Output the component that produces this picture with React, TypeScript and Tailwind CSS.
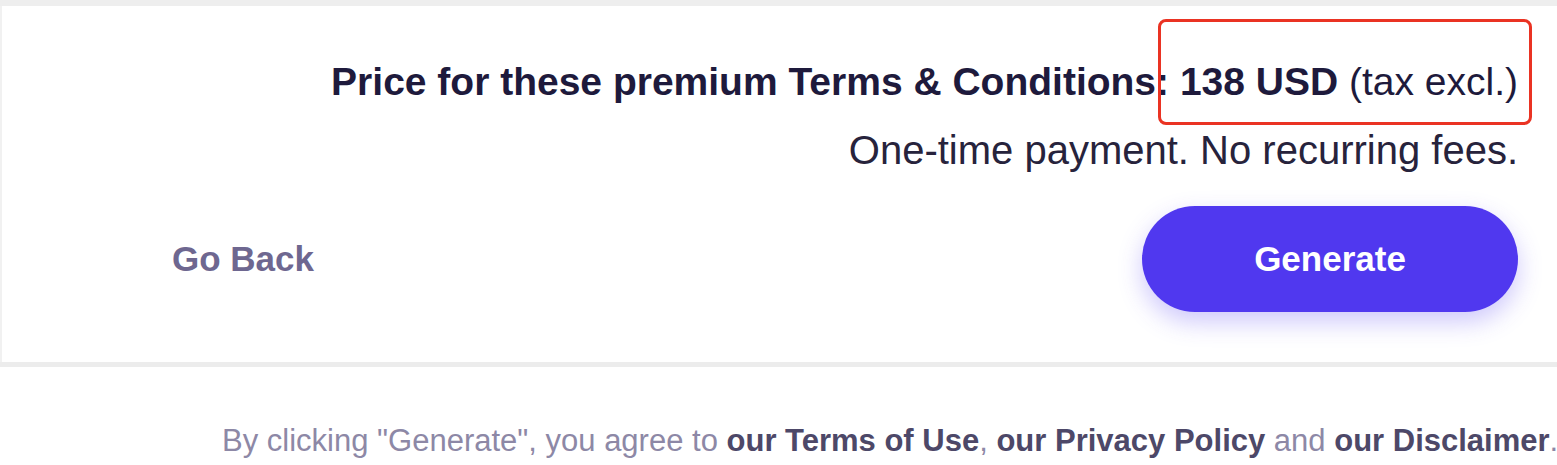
export default function App() {
  return (
    <div className="w-[1557px] h-[465px] bg-white overflow-hidden font-[family-name:Liberation_Sans,Arial,sans-serif]">
      <div className="h-[6px] bg-[#eeeeee]" />
      <div className="h-[356px] border-l-2 border-[#f1f1f1] pt-[43px] pr-[39px] pb-[50px] flex flex-col">
        <div className="flex flex-col items-end text-[39px] leading-[66px] text-[#1e1a3c]">
          <p className="whitespace-nowrap">
            <span className="font-bold">Price for these premium Terms &amp; Conditions: </span>
            <span className="relative">
              <span className="font-bold">138 USD</span> (tax excl.)
              <span className="absolute left-[-22px] right-[-14px] top-[-41px] bottom-[-22px] border-[3px] border-[#ea3323] rounded-[8px]" />
            </span>
          </p>
          <p className="whitespace-nowrap text-[40px] text-[#27233c] mt-[2px]">One-time payment. No recurring fees.</p>
        </div>
        <div className="mt-auto flex items-center justify-between pl-[170px]">
          <button type="button" className="text-[35px] font-bold text-[#6e6790]">
            Go Back
          </button>
          <button
            type="button"
            className="w-[376px] h-[106px] rounded-full bg-[#5038ef] text-white text-[35px] font-bold shadow-[0_10px_24px_rgba(80,56,239,0.28)]"
          >
            Generate
          </button>
        </div>
      </div>
      <div className="h-[5px] bg-[#ececec]" />
      <p className="pl-[222px] pt-[54px] leading-[40px] whitespace-nowrap text-[31px] text-[#8d88a6]">
        By clicking "Generate", you agree to{" "}
        <span className="font-semibold text-[#4d4868]">our Terms of Use</span>,{" "}
        <span className="font-semibold text-[#4d4868]">our Privacy Policy</span> and{" "}
        <span className="font-semibold text-[#4d4868]">our Disclaimer</span>.
      </p>
    </div>
  );
}
